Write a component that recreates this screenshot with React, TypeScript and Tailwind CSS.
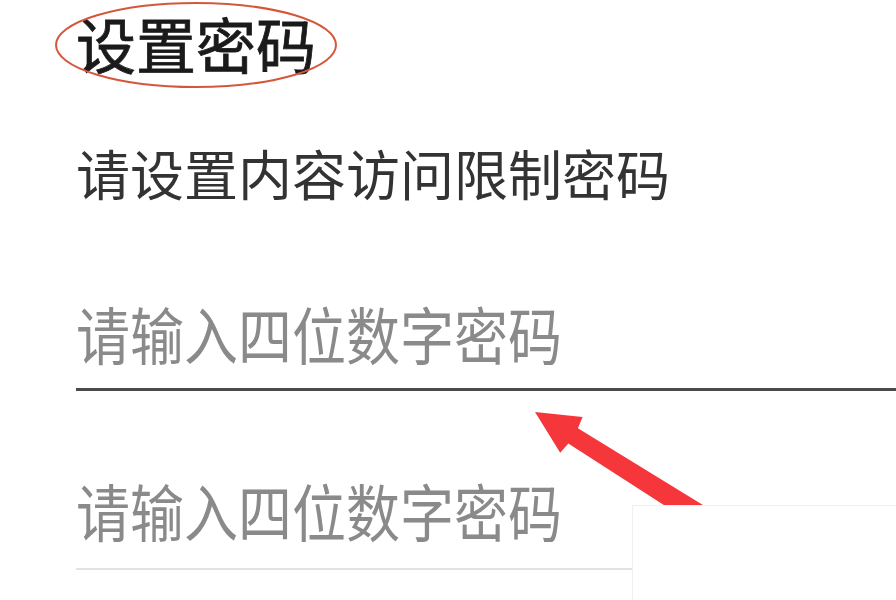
import React from "react";

// Red pointer drawn over the first password field
function PointerArrow() {
  return (
    <svg
      className="absolute left-0 top-0 pointer-events-none"
      width={896}
      height={600}
      viewBox="0 0 896 600"
    >
      <polygon
        points="535,412 582.6,417.1 577.9,428.3 735.7,525.1 723.9,543.7 568.3,443.5 560.2,452.7"
        fill="#f5363b"
      />
    </svg>
  );
}

function PinInput({ lineClass }: { lineClass: string }) {
  return (
    <div className={`w-full ${lineClass}`}>
      <input
        type="password"
        inputMode="numeric"
        maxLength={4}
        placeholder="请输入四位数字密码"
        className="w-full h-[70px] bg-transparent outline-none text-[54px] leading-[70px] scale-y-[1.15] text-[#333] placeholder:text-[#8a8a8a]"
      />
    </div>
  );
}

export default function App() {
  return (
    <div
      className="relative w-[896px] h-[600px] overflow-hidden bg-white"
      style={{ fontFamily: '"Noto Sans CJK SC", "Noto Sans", sans-serif' }}
    >
      <div className="pl-[76px] pt-[8px] flex flex-col">
        {/* Title with a hand-drawn ring around it */}
        <div className="relative w-fit">
          <h1 className="text-[60px] leading-[70px] font-normal text-[#1a1a1a] [-webkit-text-stroke:0.8px_#1a1a1a]">
            设置密码
          </h1>
          <svg
            className="absolute -left-[21px] -top-[8px] pointer-events-none"
            width={286}
            height={90}
            viewBox="0 0 286 90"
          >
            <ellipse cx={141} cy={45} rx={140} ry={42} fill="none" stroke="#d4573b" strokeWidth={2} />
          </svg>
        </div>

        <p className="mt-[65px] text-[54px] leading-[60px] text-[#333]">请设置内容访问限制密码</p>

        <div className="mt-[96px]">
          <PinInput lineClass="pb-[19px] border-b-[3px] border-[#4a4a4a]" />
        </div>
        <div className="mt-[85px]">
          <PinInput lineClass="pb-[22px] border-b-2 border-[#e2e2e2]" />
        </div>
      </div>

      <PointerArrow />

      {/* blank patch over the lower right corner */}
      <div className="absolute left-[632px] top-[505px] right-0 bottom-0 bg-white border-t border-l border-[#f4eeee]" />
    </div>
  );
}
